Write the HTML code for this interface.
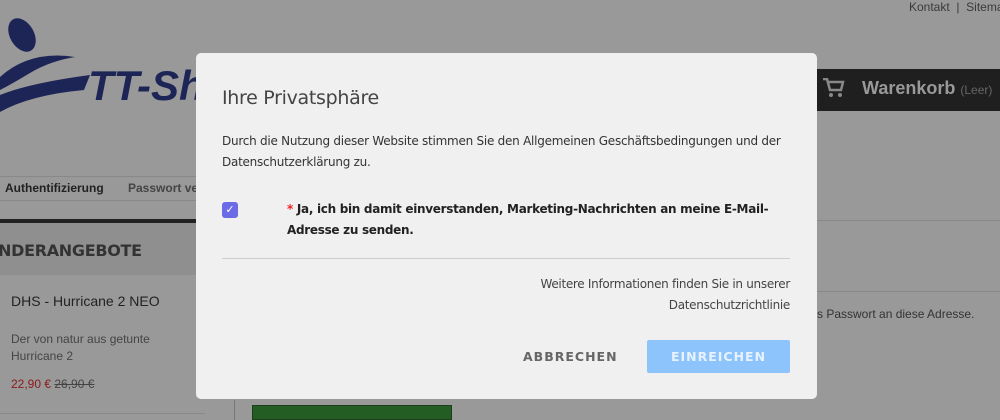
<!DOCTYPE html>
<html><head><meta charset="utf-8"><style>
*{margin:0;padding:0;box-sizing:border-box}
body{width:1000px;height:420px;overflow:hidden;background:#999;font-family:"Liberation Sans",sans-serif;position:relative}
.a{position:absolute}
.m{font-family:"DejaVu Sans","Liberation Sans",sans-serif}
</style></head><body>
<div class="a" style="left:909px;top:0;font-size:12px;color:#3a3a3a;white-space:nowrap">Kontakt &nbsp;|&nbsp; Sitemap</div>
<svg class="a" style="left:0;top:15px" width="200" height="100" viewBox="0 0 200 100">
<ellipse cx="22" cy="20" rx="12" ry="18" fill="#1d2557" transform="rotate(-30 22 20)"/>
<path d="M0 62 Q30 35 75 42 Q50 46 30 58 Q10 70 0 75Z" fill="#1d2557"/>
<path d="M0 80 Q30 68 90 60 L84 75 Q30 80 0 97Z" fill="#1d2557"/>
<text x="88" y="85" font-family="Liberation Sans" font-weight="bold" font-style="italic" font-size="42" fill="#1d2557">TT-Shop</text>
</svg>
<div class="a" style="left:0;top:176px;width:196px;height:25px;border-top:1px solid #888;border-bottom:1px solid #888"></div>
<div class="a" style="left:5px;top:181px;font-size:12px;font-weight:bold;color:#222">Authentifizierung</div>
<div class="a" style="left:128px;top:181px;font-size:12px;font-weight:bold;color:#444">Passwort ve</div>
<div class="a" style="left:0;top:219px;width:196px;height:4px;background:#222"></div>
<div class="a" style="left:0;top:223px;width:196px;height:52px;background:#8f8f8f"></div>
<div class="a m" style="left:-2px;top:241px;font-size:16px;font-weight:bold;color:#333;letter-spacing:-0.3px">NDERANGEBOTE</div>
<div class="a" style="left:11px;top:293px;font-size:14px;color:#222">DHS - Hurricane 2 NEO</div>
<div class="a" style="left:11px;top:331px;font-size:12px;color:#444;line-height:17px">Der von natur aus getunte<br>Hurricane 2</div>
<div class="a" style="left:11px;top:377px;font-size:12px;color:#8b1a1a">22,90 € <span style="color:#444;text-decoration:line-through">26,90 €</span></div>
<div class="a" style="left:0;top:413px;width:205px;height:1px;background:#888"></div>
<div class="a" style="left:234px;top:400px;width:1px;height:20px;background:#777"></div>
<div class="a" style="left:252px;top:405px;width:200px;height:15px;background:#245d24;border:1px solid #1a3f1a"></div>
<div class="a" style="left:817px;top:69px;width:183px;height:42px;background:#1f1f1f"></div>
<svg class="a" style="left:823px;top:78px" width="22" height="20" viewBox="0 0 22 20"><path d="M0 1h4l3 11h11l2-8H6" fill="none" stroke="#888" stroke-width="2.5"/><circle cx="8" cy="17" r="2" fill="#888"/><circle cx="17" cy="17" r="2" fill="#888"/></svg>
<div class="a" style="left:862px;top:78px;font-size:18px;font-weight:bold;color:#999">Warenkorb <span style="font-size:12px;font-weight:normal;color:#666">(Leer)</span></div>
<div class="a" style="left:817px;top:220px;width:183px;height:1px;background:#888"></div>
<div class="a" style="left:817px;top:291px;width:183px;height:1px;background:#888"></div>
<div class="a" style="left:817px;top:307px;font-size:12px;color:#333">s Passwort an diese Adresse.</div>

<div class="a m" style="left:196px;top:53px;width:621px;height:346px;background:#f0f0f0;border-radius:5px;color:#333">
<div class="a" style="left:26px;top:34px;font-size:19px;color:#444;letter-spacing:-0.3px">Ihre Privatsphäre</div>
<div class="a" style="left:26px;top:78px;width:590px;font-size:12px;line-height:21px;color:#333;letter-spacing:-0.25px">Durch die Nutzung dieser Website stimmen Sie den Allgemeinen Geschäftsbedingungen und der Datenschutzerklärung zu.</div>
<div class="a" style="left:26px;top:149px;width:16px;height:16px;background:#6b6be8;border-radius:3px;color:#fff;font-size:11px;line-height:16px;text-align:center">✓</div>
<div class="a" style="left:91px;top:146px;width:500px;font-size:12px;font-weight:bold;line-height:21px;color:#222;letter-spacing:-0.3px"><span style="color:#e22">*</span> Ja, ich bin damit einverstanden, Marketing-Nachrichten an meine E-Mail-Adresse zu senden.</div>
<div class="a" style="left:26px;top:205px;width:568px;height:1px;background:#ccc"></div>
<div class="a" style="right:27px;top:221px;text-align:right;font-size:12px;line-height:21px;color:#444;letter-spacing:-0.3px">Weitere Informationen finden Sie in unserer<br>Datenschutzrichtlinie</div>
<div class="a" style="left:327px;top:296px;font-size:12.5px;font-weight:bold;letter-spacing:1px;color:#666">ABBRECHEN</div>
<div class="a" style="left:451px;top:287px;width:143px;height:33px;background:#8ec4fc;border-radius:2px;color:#e8f2ff;font-size:12.5px;font-weight:bold;letter-spacing:1px;text-align:center;line-height:33px">EINREICHEN</div>
</div>
</body></html>
